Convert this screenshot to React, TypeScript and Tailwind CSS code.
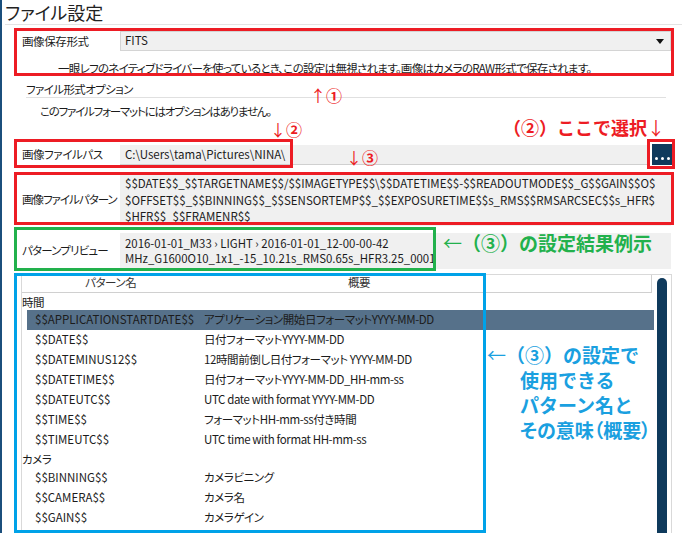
const timeRows = [
  { name: "$$APPLICATIONSTARTDATE$$", desc: "アプリケーション開始日フォーマットYYYY-MM-DD", selected: true },
  { name: "$$DATE$$", desc: "日付フォーマットYYYY-MM-DD" },
  { name: "$$DATEMINUS12$$", desc: "12時間前倒し日付フォーマット YYYY-MM-DD" },
  { name: "$$DATETIME$$", desc: "日付フォーマットYYYY-MM-DD_HH-mm-ss" },
  { name: "$$DATEUTC$$", desc: "UTC date with format YYYY-MM-DD" },
  { name: "$$TIME$$", desc: "フォーマットHH-mm-ss付き時間" },
  { name: "$$TIMEUTC$$", desc: "UTC time with format HH-mm-ss" },
];

const cameraRows = [
  { name: "$$BINNING$$", desc: "カメラビニング" },
  { name: "$$CAMERA$$", desc: "カメラ名" },
  { name: "$$GAIN$$", desc: "カメラゲイン" },
  { name: "$$OFFSET$$", desc: "カメラオフセット" },
];

function PatternRow({ name, desc, selected }: { name: string; desc: string; selected?: boolean }) {
  return (
    <div className={`ml-[5px] mr-[17px] flex h-[20px] items-center ${selected ? "bg-[#56718a]" : ""}`}>
      <div className="w-[177px] shrink-0 pl-[8px] tracking-normal">{name}</div>
      <div className="whitespace-nowrap">{desc}</div>
    </div>
  );
}

export default function App() {
  return (
    <div className="relative flex h-[533px] w-[682px] overflow-hidden bg-white font-['Noto_Sans_CJK_JP',sans-serif] text-[11.5px] tracking-[-0.4px] text-[#1b1b1b] [font-feature-settings:'palt']">
      {/* left window edge */}
      <div className="w-[2px] shrink-0 bg-[#1b4f7c]" />

      <div className="flex flex-1 flex-col">
        {/* Title */}
        <div className="ml-[3px] h-[25px] border-b border-[#e3e3e3] text-[18px] leading-[24px] tracking-normal text-[#222]">
          ファイル設定
        </div>

        {/* Image save format */}
        <div className="ml-[14px] mr-[10px] mt-[6px]">
          <div className="flex h-[20px]">
            <div className="w-[104px] shrink-0 whitespace-nowrap pl-[6px] leading-[20px]">画像保存形式</div>
            <div className="mr-[1px] flex flex-1 items-center justify-between border border-[#d4d4d4] bg-[#f0f0f0] pl-[4px] pr-[6px] tracking-normal">
              <span>FITS</span>
              <svg width="8" height="5" viewBox="0 0 8 5">
                <path d="M0 0h8L4 5z" fill="#111" />
              </svg>
            </div>
          </div>
          <div className="h-[25px] whitespace-nowrap pl-[42px] pt-[10px] leading-[14px] tracking-[-0.7px]">
            一眼レフのネイティブドライバーを使っているとき、この設定は無視されます。画像はカメラのRAW形式で保存されます。
          </div>
        </div>

        {/* File format options */}
        <div className="ml-[24px] mr-[16px] mt-[6px] h-[16px] border-b border-[#e0e0e0] leading-[15px] tracking-[-0.6px]">
          ファイル形式オプション
        </div>
        <div className="ml-[38px] mt-[5px] leading-[16px] tracking-[-1.2px]">
          このファイルフォーマットにはオプションはありません。
        </div>

        {/* Image file path */}
        <div className="ml-[14px] mr-[10px] mt-[25px] flex h-[21px]">
          <div className="w-[104px] shrink-0 whitespace-nowrap pl-[6px] leading-[21px]">画像ファイルパス</div>
          <div className="mt-[1px] flex-1 border-b border-[#d0d0d0] bg-[#f0f0f0] pl-[5px] leading-[19px] tracking-normal">
            C:\Users\tama\Pictures\NINA\
          </div>
          <button className="ml-[2px] flex h-[21px] w-[20px] items-end justify-center gap-[3px] bg-[#0f3a5c] pb-[5px]">
            <span className="h-[3px] w-[3px] rounded-full bg-white" />
            <span className="h-[3px] w-[3px] rounded-full bg-white" />
            <span className="h-[3px] w-[3px] rounded-full bg-white" />
          </button>
        </div>

        {/* Image file pattern */}
        <div className="ml-[14px] mr-[10px] mt-[9px] flex">
          <div className="flex w-[104px] shrink-0 items-center whitespace-nowrap pl-[6px] tracking-[-1px]">
            画像ファイルパターン
          </div>
          <div className="mr-[1px] flex-1 overflow-hidden whitespace-nowrap bg-[#f0f0f0] py-[1px] pl-[5px] leading-[16.5px] tracking-normal">
            $$DATE$$_$$TARGETNAME$$/$$IMAGETYPE$$\$$DATETIME$$-$$READOUTMODE$$_G$$GAIN$$O$
            <br />
            $OFFSET$$_$$BINNING$$_$$SENSORTEMP$$_$$EXPOSURETIME$$s_RMS$$RMSARCSEC$$s_HFR$
            <br />
            $HFR$$_$$FRAMENR$$
          </div>
        </div>

        {/* Pattern preview */}
        <div className="ml-[14px] mr-[10px] mt-[7px] flex">
          <div className="flex w-[104px] shrink-0 items-center whitespace-nowrap pl-[6px] tracking-[-0.8px]">
            パターンプリビュー
          </div>
          <div className="mr-[1px] flex-1 whitespace-nowrap bg-[#f0f0f0] py-[3px] pl-[5px] text-[11.4px] leading-[15px] tracking-normal">
            2016-01-01_M33 › LIGHT › 2016-01-01_12-00-00-42
            <br />
            MHz_G1600O10_1x1_-15_10.21s_RMS0.65s_HFR3.25_0001
          </div>
        </div>

        {/* Pattern list */}
        <div className="relative ml-[19px] mr-[10px] mt-[5px] flex-1 border-l border-r border-t border-[#d9d9d9]">
          <div className="mr-[19px] flex h-[18px] items-center border-b border-r border-[#d0d0d0] text-[#333]">
            <div className="w-[316px] pl-[63px]">パターン名</div>
            <div className="pl-[10px]">概要</div>
          </div>
          <div className="h-[17px] leading-[19px]">時間</div>
          {timeRows.map((r) => (
            <PatternRow key={r.name} {...r} />
          ))}
          <div className="h-[18px] leading-[18px]">カメラ</div>
          {cameraRows.map((r) => (
            <PatternRow key={r.name} {...r} />
          ))}
          <div className="absolute bottom-0 right-[4px] top-[3px] w-[10px] rounded-t-full bg-[#0f3a5c]" />
        </div>
      </div>

      {/* Annotation boxes */}
      <div className="absolute left-[14px] top-[28px] h-[48px] w-[660px] border-[3px] border-[#ed1c24]" />
      <div className="absolute left-[14px] top-[139px] h-[29px] w-[279px] border-[3px] border-[#ed1c24]" />
      <div className="absolute left-[647px] top-[139px] h-[30px] w-[28px] border-[3px] border-[#ed1c24]" />
      <div className="absolute left-[14px] top-[172px] h-[53px] w-[660px] border-[3px] border-[#ed1c24]" />
      <div className="absolute left-[14px] top-[227px] h-[44px] w-[422px] border-[3px] border-[#22b14c]" />
      <div className="absolute left-[14px] top-[273px] h-[260px] w-[472px] border-[3px] border-[#00a2e8]" />

      {/* Annotation texts */}
      <div className="absolute left-[310px] top-[85px] text-[16px] leading-[20px] tracking-normal text-[#ed1c24] [font-feature-settings:normal]">
        ↑<span className="font-bold">①</span>
      </div>
      <div className="absolute left-[270px] top-[119px] text-[16px] leading-[20px] tracking-normal text-[#ed1c24] [font-feature-settings:normal]">
        ↓<span className="font-bold">②</span>
      </div>
      <div className="absolute left-[346px] top-[147px] text-[16px] leading-[20px] tracking-normal text-[#ed1c24] [font-feature-settings:normal]">
        ↓<span className="font-bold">③</span>
      </div>
      <div className="absolute left-[503px] top-[115px] text-[18px] font-bold leading-[24px] tracking-normal text-[#ed1c24] [font-feature-settings:normal]">
        （②）ここで選択<span className="font-normal">↓</span>
      </div>
      <div className="absolute left-[443px] top-[231px] text-[19px] font-bold leading-[24px] tracking-normal text-[#22b14c] [font-feature-settings:normal]">
        <span className="font-normal">←</span>（③）の設定結果例示
      </div>
      <div className="absolute left-[487px] top-[342px] text-[19px] font-bold leading-[25px] tracking-normal text-[#1aa0e0] [font-feature-settings:normal]">
        <div>
          <span className="font-normal">←</span>（③）の設定で
        </div>
        <div className="pl-[33px]">使用できる</div>
        <div className="pl-[33px]">パターン名と</div>
        <div className="pl-[33px] [font-feature-settings:'palt']">その意味（概要）</div>
      </div>
    </div>
  );
}
